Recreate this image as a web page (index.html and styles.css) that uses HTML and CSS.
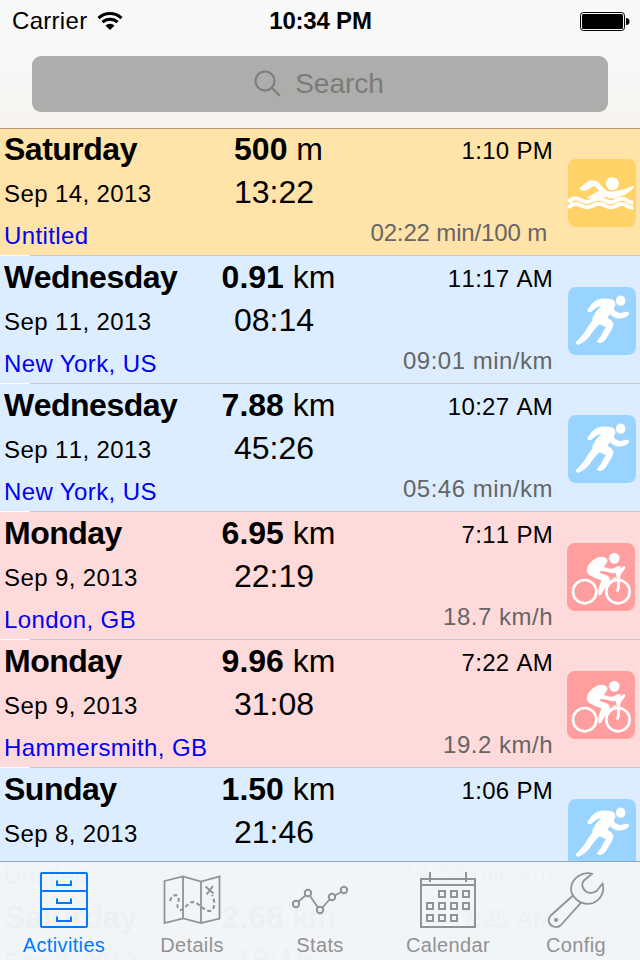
FILE: index.html
```html
<!DOCTYPE html>
<html lang="en">
<head>
  <meta charset="UTF-8">
  <meta name="viewport" content="width=device-width, initial-scale=1.0">
  <title>Activities</title>

  <link rel="stylesheet" href="styles.css">
</head>
<body>
  <!-- Shared sport icons -->
  <svg class="sprites" width="0" height="0" aria-hidden="true">
    <symbol id="swim" viewBox="24 27 204 204">
      <circle cx="157" cy="101" r="19.500"/>
      <path d="M59 114 C70 108 80 93 91 91 C103 89 111 92 117 99 C126 108 133 119 143 124 C162 126 198 117 220 107 C225 111 216 119 209 124 C201 132 188 138 174 141 C164 147 151 147 139 141 C128 137 116 151 103 147 L80 143 C94 136 109 128 116 121 L102 107 C94 111 86 119 76 122 C68 124 60 120 59 114 Z"/>
      <path class="wave" d="M25 157 C36 142 49 143 61 149 C76 157 84 158 97 151 C109 144 118 143 131 149 C145 157 154 160 168 152 C180 144 191 145 200 151 C207 156 212 158 220 157"/>
      <path class="wave" d="M25 173 C36 159 49 160 61 165 C76 173 84 174 97 167 C109 160 118 159 131 165 C145 173 154 175 168 168 C180 160 191 161 200 167 C207 171 212 173 220 172"/>
    </symbol>
    <symbol id="run" viewBox="24 21 204 204">
      <ellipse cx="182" cy="62" rx="14.500" ry="15.500"/>
      <path d="M82 94 C82 86 95 70 110 60 C122 54 142 54 156 58 C165 62 168 71 165 79 L161 87 C168 96 175 99 184 99 C191 97 198 94 205 96 C209 99 207 106 201 109 C191 115 177 118 166 114 C159 111 155 107 150 103 L142 113 C151 117 159 123 160 132 C161 141 152 153 147 163 C141 174 135 183 125 188 C119 190 111 189 111 184 C113 179 119 174 123 167 L137 142 L120 133 C108 140 100 153 89 169 C79 181 67 190 57 194 C52 196 47 191 48 186 C57 176 67 167 76 153 C86 139 92 128 97 121 C97 108 107 97 117 85 L124 78 C113 79 105 86 97 93 C92 98 85 98 82 94 Z"/>
    </symbol>
    <symbol id="bike" viewBox="22 21 204 204">
      <circle class="wheel" cx="75" cy="167" r="35"/>
      <circle class="wheel" cx="175" cy="167" r="35"/>
      <circle cx="164" cy="67" r="16"/>
      <path d="M82 98 C84 85 98 71 112 65 C124 60 139 63 143 71 C145 79 136 87 132 93 L153 98 C162 98 169 93 178 90 C183 91 184 95 181 98 L192 90 C198 90 198 96 194 101 L184 114 C180 123 183 143 180 158 L176 168 L169 166 C173 155 173 141 171 130 L169 111 C161 113 151 110 140 107 L125 104 L119 110 C133 115 150 119 151 128 C151 137 140 146 133 157 C129 166 127 176 120 179 C114 178 115 168 117 160 C119 148 122 140 126 134 C112 128 90 121 84 112 C81 108 81 103 82 98 Z"/>
      <path class="frame" d="M120 173 L137 149 L169 126"/>
    </symbol>
  </svg>

  <header class="header">
    <div class="status-bar">
      <div class="carrier">
        Carrier
        <svg class="wifi" width="26" height="20" viewBox="0 0 26 20">
          <path d="M13 19 L8.500 14.500 A6.500 6.500 0 0 1 17.500 14.500 Z"/>
          <path class="arc" d="M5.400 11.200 A11 11 0 0 1 20.600 11.200"/>
          <path class="arc" d="M1.500 7.200 A16.500 16.500 0 0 1 24.500 7.200"/>
        </svg>
      </div>
      <div class="clock">10:34 PM</div>
      <div class="battery-wrap">
        <svg width="50" height="20" viewBox="0 0 50 20">
          <rect x="0.500" y="1.500" width="44" height="18" rx="3" fill="none" stroke="#000"/>
          <rect x="2" y="3" width="41" height="15" rx="1.500"/>
          <path d="M46 7 A3.500 3.500 0 0 1 46 14 Z"/>
        </svg>
      </div>
    </div>
    <div class="search">
      <svg width="28" height="28" viewBox="0 0 28 28">
        <circle cx="11" cy="11" r="9.500"/>
        <path d="M17.800 17.800 L25.500 25.500"/>
      </svg>
      <span>Search</span>
    </div>
  </header>

  <ul class="activities">
    <li class="activity swim">
      <div class="info">
        <h2 class="day">Saturday</h2>
        <p class="date">Sep 14, 2013</p>
        <p class="place">Untitled</p>
      </div>
      <div class="stats">
        <p class="distance"><b>500</b> m</p>
        <p class="duration">13:22</p>
      </div>
      <div class="meta">
        <p class="start">1:10 PM</p>
        <p class="pace">02:22 min/100 m</p>
      </div>
      <svg class="sport"><use href="#swim"/></svg>
    </li>
    <li class="activity run">
      <div class="info">
        <h2 class="day">Wednesday</h2>
        <p class="date">Sep 11, 2013</p>
        <p class="place">New York, US</p>
      </div>
      <div class="stats">
        <p class="distance"><b>0.91</b> km</p>
        <p class="duration">08:14</p>
      </div>
      <div class="meta">
        <p class="start">11:17 AM</p>
        <p class="pace">09:01 min/km</p>
      </div>
      <svg class="sport"><use href="#run"/></svg>
    </li>
    <li class="activity run">
      <div class="info">
        <h2 class="day">Wednesday</h2>
        <p class="date">Sep 11, 2013</p>
        <p class="place">New York, US</p>
      </div>
      <div class="stats">
        <p class="distance"><b>7.88</b> km</p>
        <p class="duration">45:26</p>
      </div>
      <div class="meta">
        <p class="start">10:27 AM</p>
        <p class="pace">05:46 min/km</p>
      </div>
      <svg class="sport"><use href="#run"/></svg>
    </li>
    <li class="activity bike">
      <div class="info">
        <h2 class="day">Monday</h2>
        <p class="date">Sep 9, 2013</p>
        <p class="place">London, GB</p>
      </div>
      <div class="stats">
        <p class="distance"><b>6.95</b> km</p>
        <p class="duration">22:19</p>
      </div>
      <div class="meta">
        <p class="start">7:11 PM</p>
        <p class="pace">18.7 km/h</p>
      </div>
      <svg class="sport"><use href="#bike"/></svg>
    </li>
    <li class="activity bike">
      <div class="info">
        <h2 class="day">Monday</h2>
        <p class="date">Sep 9, 2013</p>
        <p class="place">Hammersmith, GB</p>
      </div>
      <div class="stats">
        <p class="distance"><b>9.96</b> km</p>
        <p class="duration">31:08</p>
      </div>
      <div class="meta">
        <p class="start">7:22 AM</p>
        <p class="pace">19.2 km/h</p>
      </div>
      <svg class="sport"><use href="#bike"/></svg>
    </li>
    <li class="activity run">
      <div class="info">
        <h2 class="day">Sunday</h2>
        <p class="date">Sep 8, 2013</p>
        <p class="place">Untitled</p>
      </div>
      <div class="stats">
        <p class="distance"><b>1.50</b> km</p>
        <p class="duration">21:46</p>
      </div>
      <div class="meta">
        <p class="start">1:06 PM</p>
        <p class="pace">14:30 min/km</p>
      </div>
      <svg class="sport"><use href="#run"/></svg>
    </li>
    <li class="activity run">
      <div class="info">
        <h2 class="day">Saturday</h2>
        <p class="date">Sep 7, 2013</p>
      </div>
      <div class="stats">
        <p class="distance"><b>2.68</b> km</p>
        <p class="duration">18:16</p>
      </div>
      <div class="meta">
        <p class="start">7:25 AM</p>
      </div>
      <svg class="sport"><use href="#run"/></svg>
    </li>
  </ul>

  <nav class="tab-bar">
    <a class="tab active">
      <svg viewBox="0 0 58 58">
        <rect x="6" y="2" width="46" height="54" rx="1"/>
        <path d="M6 20 H52 M6 38 H52"/>
        <path d="M22 9.500 V14 H36 V9.500 M22 27.500 V32 H36 V27.500 M22 45.500 V50 H36 V45.500"/>
      </svg>
      <span>Activities</span>
    </a>
    <a class="tab">
      <svg class="thin" viewBox="0 0 58 58">
        <path d="M1.500 10 L20 5.500 L38 10.500 L56.500 5.500 V47.500 L38 52 L20 47.500 L1.500 52 Z M20 5.500 V47.500 M38 10.500 V52"/>
        <path class="dashes" d="M7 30 C8 25 13 22 15.500 26 C17 30 12 35 16 38.500 C21 41 24 31 30 31 C36 32 40 39 46 40 C53 40 52 29 49 24"/>
        <path class="thick" d="M42.500 15.500 L50.500 22.500 M50 15 L43.500 23.500"/>
      </svg>
      <span>Details</span>
    </a>
    <a class="tab">
      <svg class="thin" viewBox="0 0 58 58">
        <path d="M7.500 30.500 L14.500 24.500 M19 25 L27 36.500 M31.500 36.500 L38.500 28.500 M44 24.500 L50 21"/>
        <g class="thick">
          <circle cx="5" cy="33" r="3.200"/>
          <circle cx="17" cy="22" r="3.200"/>
          <circle cx="29" cy="39" r="3.200"/>
          <circle cx="41" cy="26" r="3.200"/>
          <circle cx="53" cy="19" r="3.200"/>
        </g>
      </svg>
      <span>Stats</span>
    </a>
    <a class="tab">
      <svg viewBox="0 0 58 58">
        <path d="M2 8 H56 V56 H2 Z M2 14 H56 M11 1 V11 M47 1 V11"/>
        <path d="M20 20 h6 v6 h-6 Z M32 20 h6 v6 h-6 Z M44 20 h6 v6 h-6 Z"/>
        <path d="M8 32 h6 v6 h-6 Z M20 32 h6 v6 h-6 Z M32 32 h6 v6 h-6 Z M44 32 h6 v6 h-6 Z"/>
        <path d="M8 44 h6 v6 h-6 Z M20 44 h6 v6 h-6 Z M32 44 h6 v6 h-6 Z"/>
      </svg>
      <span>Calendar</span>
    </a>
    <a class="tab">
      <svg class="thin" viewBox="0 0 58 58">
        <path d="M45 2.800 C36 0 24 7 24 18 C24 21 25 23 26 24.500 C30 31 38 34.500 46 32 C54 29 58 20 55.500 12.500 L50 19.500 C47 22.500 42 22.500 39 20.500 C35 17.500 34 12.500 37 9.500 Z"/>
        <path d="M26 24.500 L3.800 44.500 C0 49 2 54 6.500 55.500 C9 56.500 12 56 14 54 L34 31.700"/>
        <circle class="dot" cx="9" cy="49" r="2"/>
      </svg>
      <span>Config</span>
    </a>
  </nav>
</body>
</html>
```
FILE: styles.css
```css
* {
  margin: 0;
  padding: 0;
  box-sizing: border-box;
}

body {
  position: relative;
  height: 960px;
  overflow: hidden;
  background-color: #f8f8f8;
  color: #000;
  font-family: "Liberation Sans", Arial, sans-serif;
  font-kerning: none;
}

.sprites {
  position: absolute;
}

/* Header */
.header {
  position: relative;
  height: 129px;
  margin-bottom: -1px;
  background: linear-gradient(#f8f8f8 45%, #f7f4ef) padding-box;
  border-bottom: 1px solid rgba(0, 0, 0, 0.3);
}

.status-bar {
  display: grid;
  grid-template-columns: 1fr auto 1fr;
  align-items: center;
  height: 42px;
  padding: 0 11px 0 12px;
  font-size: 24px;
}

.carrier {
  display: flex;
  align-items: center;
  gap: 10px;
  letter-spacing: 0.3px;
}

.wifi .arc {
  fill: none;
  stroke: #000;
  stroke-width: 3;
}

.clock {
  font-weight: bold;
  letter-spacing: -0.2px;
}

.battery-wrap {
  display: flex;
  justify-content: flex-end;
  margin-right: -1px;
}

.search {
  display: flex;
  justify-content: center;
  align-items: center;
  gap: 13px;
  height: 56px;
  margin: 14px 32px 0;
  padding-right: 2px;
  border-radius: 9px;
  background-color: #adadab;
  color: #7b7b7a;
  font-size: 28px;
}

.search svg {
  fill: none;
  stroke: #7b7b7a;
  stroke-width: 2;
}

/* Activity list */
.activities {
  height: 832px;
  overflow: hidden;
  list-style: none;
}

.activity {
  display: grid;
  grid-template-columns: 200px 148px 205px 68px;
  height: 128px;
  background: linear-gradient(to right, #fff 30px, #c3c7cf 30px) bottom / 100% 1px no-repeat;
}

.swim {
  background-color: #ffe3a8;
}

.run {
  background-color: #dcedff;
}

.bike {
  background-color: #ffdada;
}

.info {
  padding-left: 4px;
  white-space: nowrap;
}

.day {
  font-size: 32px;
  line-height: 42px;
  letter-spacing: -0.5px;
}

.date,
.place {
  font-size: 24px;
  letter-spacing: 0.4px;
}

.date {
  line-height: 48px;
}

.place {
  line-height: 36px;
  color: #0000f5;
  font-kerning: normal;
}

.stats {
  font-size: 32px;
  text-align: center;
}

.distance {
  padding-left: 9px;
  line-height: 42px;
}

.duration {
  line-height: 44px;
}

.meta {
  font-size: 24px;
  text-align: right;
}

.start {
  line-height: 45px;
  letter-spacing: 0.3px;
}

.pace {
  margin-top: 42px;
  line-height: 36px;
  letter-spacing: 0.5px;
  color: #666;
}

.swim .pace {
  padding-right: 6px;
  letter-spacing: -0.15px;
}

.sport {
  width: 68px;
  height: 68px;
  margin: 31px 0 0 15px;
  border-radius: 8px;
  fill: #fff;
}

.swim .sport {
  background-color: #ffd367;
}

.run .sport {
  background-color: #99d3ff;
}

.bike .sport {
  margin-left: 14px;
  background-color: #ff9e9e;
}

.wave {
  fill: none;
  stroke: #fff;
  stroke-width: 12;
}

.wheel,
.frame {
  fill: none;
  stroke: #fff;
  stroke-width: 8;
}

/* Tab bar lies over the list */
.tab-bar {
  position: absolute;
  left: 0;
  right: 0;
  bottom: 0;
  display: flex;
  height: 99px;
  border-top: 1px solid #93a5b8;
  background-color: rgba(242, 245, 247, 0.98);
}

.tab {
  flex: 1;
  display: flex;
  flex-direction: column;
  align-items: center;
  gap: 2px;
  padding-top: 9px;
  color: #929292;
  font-size: 20px;
  line-height: 29px;
  letter-spacing: 0.35px;
}

.tab svg {
  flex-shrink: 0;
  width: 58px;
  height: 58px;
  fill: none;
  stroke: currentColor;
  stroke-width: 2;
}

.tab .thin {
  stroke-width: 1.8;
}

.tab .thick {
  stroke-width: 2;
}

.tab .dashes {
  stroke-width: 2;
  stroke-dasharray: 4 2.5;
}

.tab .dot {
  fill: currentColor;
  stroke: none;
}

.active {
  color: #007aff;
}
```
